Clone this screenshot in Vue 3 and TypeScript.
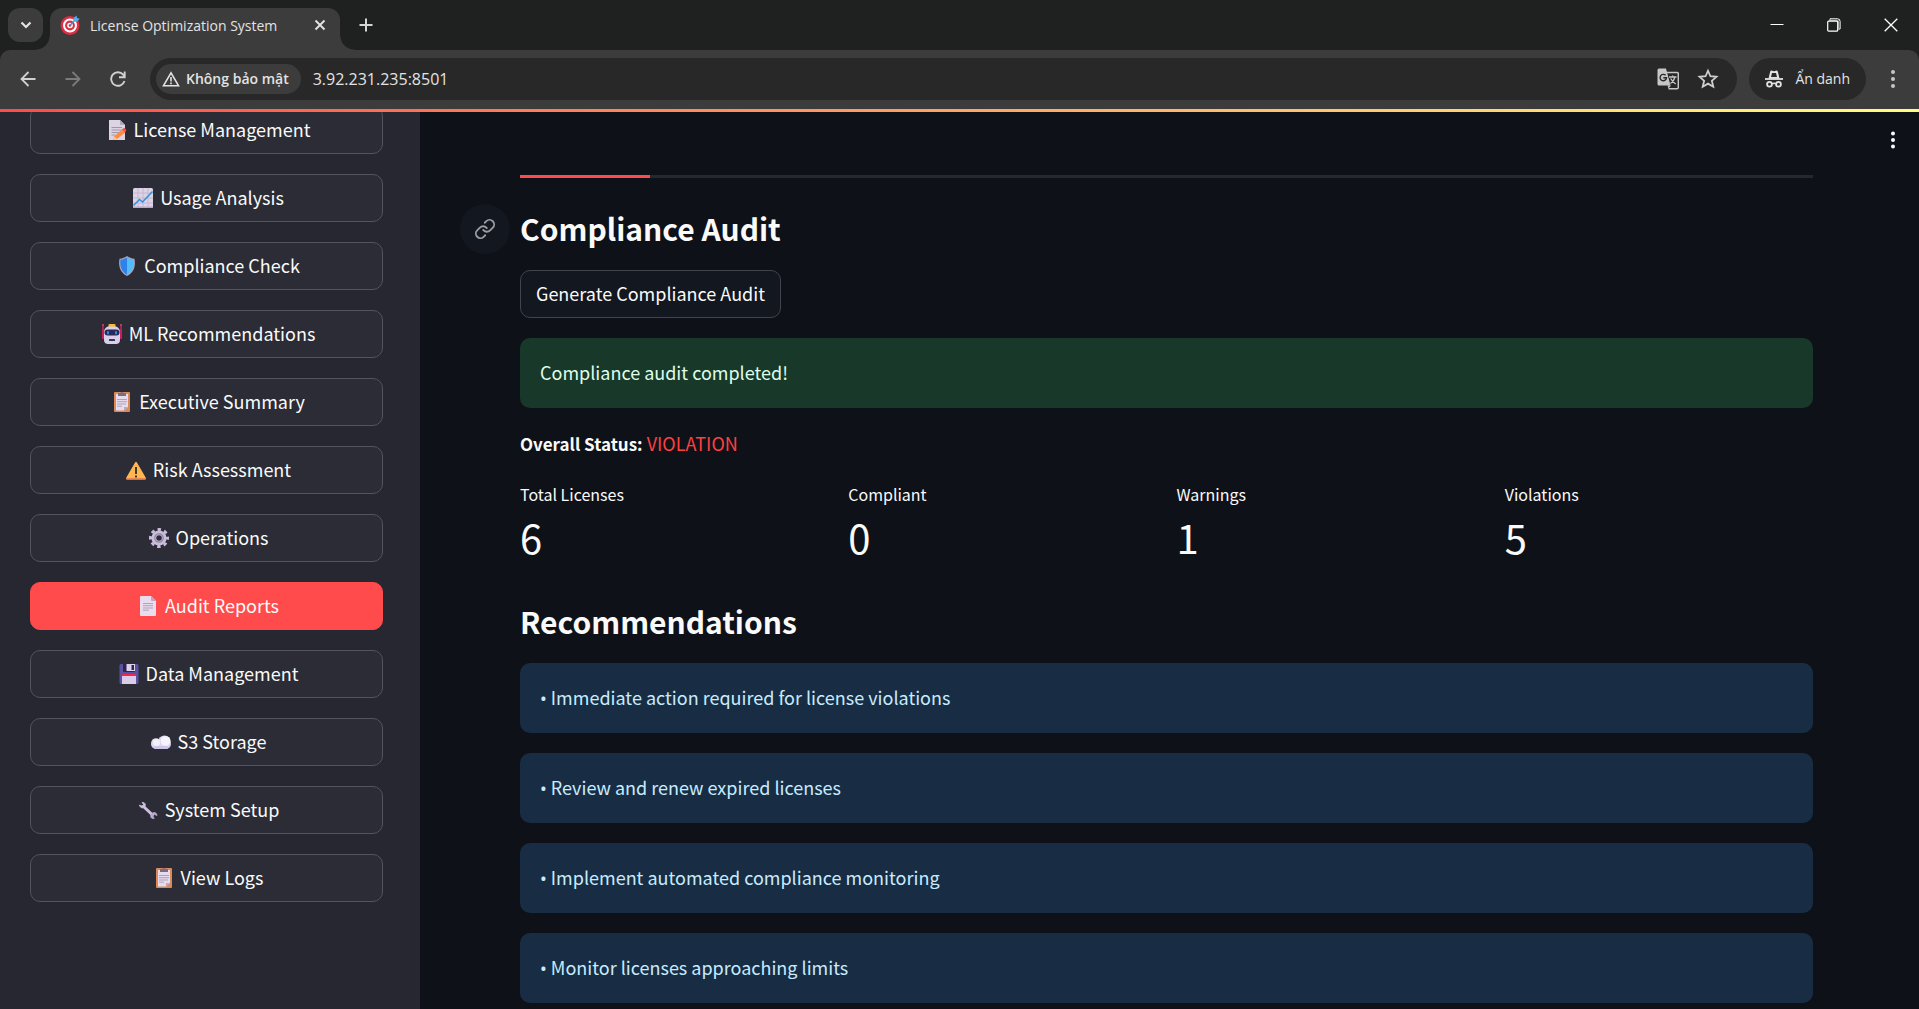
<script setup lang="ts">
import { ref } from 'vue'

interface NavItem {
  icon: string
  label: string
}

interface Metric {
  label: string
  value: number
}

const address = ref('3.92.231.235:8501')
const activePage = ref('Audit Reports')

const navItems: NavItem[] = [
  { icon: 'memo', label: 'License Management' },
  { icon: 'chart', label: 'Usage Analysis' },
  { icon: 'shield', label: 'Compliance Check' },
  { icon: 'robot', label: 'ML Recommendations' },
  { icon: 'clipboard', label: 'Executive Summary' },
  { icon: 'warning', label: 'Risk Assessment' },
  { icon: 'gear', label: 'Operations' },
  { icon: 'page', label: 'Audit Reports' },
  { icon: 'floppy', label: 'Data Management' },
  { icon: 'cloud', label: 'S3 Storage' },
  { icon: 'wrench', label: 'System Setup' },
  { icon: 'clipboard', label: 'View Logs' },
]

const metrics: Metric[] = [
  { label: 'Total Licenses', value: 6 },
  { label: 'Compliant', value: 0 },
  { label: 'Warnings', value: 1 },
  { label: 'Violations', value: 5 },
]

const recommendations: string[] = [
  'Immediate action required for license violations',
  'Review and renew expired licenses',
  'Implement automated compliance monitoring',
  'Monitor licenses approaching limits',
]
</script>

<template>
  <div class="window">
    <header class="browser">
      <div class="tab-strip">
        <button class="tab-search" aria-label="Search tabs">
          <svg width="12" height="8" viewBox="0 0 12 8"><path d="M1.5 1.5 6 6l4.500-4.500" fill="none" stroke="#e3e3e3" stroke-width="2.200" /></svg>
        </button>
        <div class="tab">
          <svg class="favicon" width="20" height="20" viewBox="0 0 20 20">
            <circle cx="10" cy="10.500" r="9.500" fill="#dd2e44" />
            <circle cx="10" cy="10.500" r="7" fill="#fff" />
            <circle cx="10" cy="10.500" r="4.900" fill="#dd2e44" />
            <circle cx="10" cy="10.500" r="2.800" fill="#fff" />
            <circle cx="10" cy="10.500" r="1.300" fill="#dd2e44" />
            <path d="M10 10.500 15 5" stroke="#4b8fbd" stroke-width="1.200" />
            <path d="M13.500 6.500V3L16.500.5 17 3l2.700.7L17 6.700z" fill="#55acee" />
          </svg>
          <span class="tab-title">License Optimization System</span>
          <button class="tab-close" aria-label="Close tab">
            <svg width="12" height="12" viewBox="0 0 12 12"><path d="M1.500 1.500l9 9M10.500 1.500l-9 9" stroke="#e3e3e3" stroke-width="1.900" /></svg>
          </button>
        </div>
        <button class="new-tab" aria-label="New tab">
          <svg width="14" height="14" viewBox="0 0 14 14"><path d="M7 .5v13M.5 7h13" stroke="#d5d5d5" stroke-width="2" /></svg>
        </button>
        <div class="window-controls">
          <button aria-label="Minimize">
            <svg width="14" height="14" viewBox="0 0 14 14"><path d="M.5 6.500h13" stroke="#fff" stroke-width="1" /></svg>
          </button>
          <button aria-label="Restore">
            <svg width="14" height="14" viewBox="0 0 14 14" fill="none">
              <path d="M3 2V.8h7.500a2.600 2.600 0 0 1 2.600 2.600V11H12" stroke="#fff" />
              <path d="M2 2.500h7.500c1 0 2 1 2 2V12" stroke="#8c8c8c" stroke-width="1.500" />
              <rect x=".7" y="3.200" width="10" height="10" rx="1" stroke="#fff" stroke-width="1.200" fill="#1f2120" />
            </svg>
          </button>
          <button aria-label="Close window">
            <svg width="14" height="14" viewBox="0 0 14 14"><path d="M.7.7l12.600 12.600M13.300.7.7 13.300" stroke="#fff" stroke-width="1.300" /></svg>
          </button>
        </div>
      </div>

      <div class="toolbar">
        <div class="history">
          <button aria-label="Back">
            <svg width="16" height="16" viewBox="0 0 16 16" fill="none" stroke="#d0d0d0" stroke-width="1.800"><path d="M15.500 8H1.500M8.500 1 1.500 8l7 7" /></svg>
          </button>
          <button aria-label="Forward">
            <svg width="16" height="16" viewBox="0 0 16 16" fill="none" stroke="#7c7c7c" stroke-width="1.800"><path d="M.5 8h14M7.500 1l7 7-7 7" /></svg>
          </button>
          <button aria-label="Reload">
            <svg width="16" height="16" viewBox="0 0 16 16" fill="none" stroke="#d0d0d0" stroke-width="1.900"><path d="M14.500 10A6.800 6.800 0 1 1 13.200 3.600L14.500 5.300M14.700.5v5.700H9" /></svg>
          </button>
        </div>
        <div class="omnibox">
          <button class="security">
            <svg width="18" height="16" viewBox="0 0 18 16" fill="none" stroke="#e3e3e3" stroke-width="1.600"><path d="M9 1.800 1.500 14.700h15zM9 6v4.500M9 11.500v1.700" /></svg>
            <span>Không bảo mật</span>
          </button>
          <input v-model="address" class="address" aria-label="Address" type="text" spellcheck="false" />
          <button class="page-action" aria-label="Translate this page">
            <svg width="22" height="22" viewBox="0 0 22 22" fill="none">
              <path d="M9 4.500h11a1.300 1.300 0 0 1 1.300 1.300v13.700a1.300 1.300 0 0 1-1.300 1.300h-8.500" stroke="#c7c7c7" stroke-width="1.500" />
              <path d="M2 .5h7l4.500 17H2A1.500 1.500 0 0 1 .5 16V2A1.500 1.500 0 0 1 2 .5z" fill="#c7c7c7" />
              <path d="M10.500 17.500h3.500l-2.500 3z" fill="#c7c7c7" />
              <path d="M8.600 7.300A3.200 3.200 0 1 0 9.500 9.700H6.300" stroke="#282828" stroke-width="1.400" />
              <path d="M12 9h7.500M15.700 7.500V9M18 9c-.7 3-2.500 5-4.500 6.500M13.700 10.500c1 2 2.800 4 5 5.500" stroke="#c7c7c7" stroke-width="1.300" />
            </svg>
          </button>
          <button class="page-action" aria-label="Bookmark this tab">
            <svg width="22" height="22" viewBox="0 0 20 20"><path d="M10 2.500l2.200 5 5.500.5-4.200 3.600 1.300 5.400L10 14.200 5.200 17l1.300-5.400L2.300 8l5.500-.5z" fill="none" stroke="#d0d0d0" stroke-width="1.600" /></svg>
          </button>
        </div>
        <button class="incognito">
          <svg width="18" height="18" viewBox="0 0 18 18" fill="none">
            <path d="M3.500 8.500 5.200 1.500C5.500.5 6.500.3 7.200.7c1 .6 2.600.6 3.600 0 .7-.4 1.700-.2 2 .8L14.500 8.500z" fill="#e3e3e3" />
            <path d="M7 3h4l1 4H6z" fill="#282828" />
            <path d="M0 9h18" stroke="#e3e3e3" stroke-width="1.800" />
            <path d="M7 14c1-.9 3-.9 4 0" stroke="#e3e3e3" stroke-width="1.500" />
            <circle cx="4.500" cy="14.300" r="2.400" stroke="#e3e3e3" stroke-width="1.800" />
            <circle cx="13.500" cy="14.300" r="2.400" stroke="#e3e3e3" stroke-width="1.800" />
          </svg>
          <span>Ẩn danh</span>
        </button>
        <button class="more" aria-label="Browser menu">
          <svg width="4" height="18" viewBox="0 0 4 18" fill="#c7c7c7"><circle cx="2" cy="2" r="2" /><circle cx="2" cy="9" r="2" /><circle cx="2" cy="16" r="2" /></svg>
        </button>
      </div>
    </header>

    <div class="decoration"></div>

    <div class="app">
      <aside class="sidebar">
        <nav class="nav">
          <button
            v-for="item in navItems"
            :key="item.label"
            class="nav-button"
            :class="{ active: item.label === activePage }"
            @click="activePage = item.label"
          >
            <svg width="27" height="20" viewBox="-4 0 27 20" fill="none" aria-hidden="true">
              <g v-if="item.icon === 'memo'">
                <path d="M2 0h11l5 5v15H2z" fill="#dcd3e4" />
                <path d="M13 0v5h5z" fill="#b4a9bd" />
                <path d="M4.500 7.500H15M4.500 10H15M4.500 12.500h8M4.500 15h4" stroke="#9a8fa5" stroke-width=".9" />
                <path d="M7 16.500 15 9.500l3 3.200-8 6.300-4 .8z" fill="#ff8b3d" />
                <path d="m15 9.500 1.500-1.300c1-.9 3.400 1.700 2.600 2.800L18 12.700z" fill="#f4504f" />
                <path d="m7 16.500 3 2.500-4 .8z" fill="#fbc9a6" />
              </g>
              <g v-else-if="item.icon === 'chart'">
                <rect width="20" height="20" rx="1.500" fill="#dcd3e4" />
                <path d="M5 0v20M10 0v20M15 0v20M0 5h20M0 10h20M0 15h20" stroke="#bfb3cb" stroke-width=".8" />
                <path d="M0 18.500h20v.5a1 1 0 0 1-1 1H1a1 1 0 0 1-1-1z" fill="#bba5d0" />
                <path d="m.5 17.500 6-6 3 2.500L19.500 3.500" stroke="#2d91dd" stroke-width="1.500" />
              </g>
              <g v-else-if="item.icon === 'shield'">
                <path d="M10 0c2 1.600 4.500 2.500 7.500 2.700 1.500 8-1 14-7.500 17.300C3.500 16.700 1 10.700 2.500 2.700 5.500 2.500 8 1.600 10 0z" fill="#aaa3bd" />
                <path d="M10 1.500c-2 1.300-4 2-6.500 2.200C2.600 10.500 4.800 15.600 10 18.700z" fill="#2e83e8" />
                <path d="M10 1.500c2 1.300 4 2 6.500 2.200.9 6.800-1.300 11.900-6.500 15z" fill="#51bdfb" />
              </g>
              <g v-else-if="item.icon === 'robot'">
                <path d="M1 1v5M19 1v5" stroke="#e32661" stroke-width="1.200" />
                <circle cx="1" cy="1" r="1" fill="#ee3c5a" /><circle cx="19" cy="1" r="1" fill="#ee3c5a" />
                <rect x="0" y="5" width="3" height="10" rx="1" fill="#c91c5d" /><rect x="17" y="5" width="3" height="10" rx="1" fill="#c91c5d" />
                <rect x="6.500" y="0" width="7" height="4" rx="1" fill="#fbb92f" />
                <path d="M2 9c0-4 2-6.500 5-6.500h6c3 0 5 2.500 5 6.500v7c0 2.500-1.500 4-4 4H6c-2.500 0-4-1.500-4-4z" fill="#d9cfe9" />
                <rect x="2.500" y="5.500" width="15" height="6" rx="3" fill="#29295a" />
                <rect x="5" y="7" width="2" height="3.500" rx="1" fill="#2a8fd0" /><rect x="13" y="7" width="2" height="3.500" rx="1" fill="#2a8fd0" />
                <rect x="7" y="15" width="6" height="2" rx=".5" fill="#39315f" />
              </g>
              <g v-else-if="item.icon === 'clipboard'">
                <rect x="2" y="0" width="16" height="20" rx="1" fill="#d98a58" />
                <path d="M4 2h12v13l-4 3.500H4z" fill="#e6dced" />
                <path d="M12 18.500V15h4z" fill="#b9a8c5" />
                <path d="M6 1h2c.5-1 3.500-1 4 0h2v3H6z" fill="#786d81" />
                <path d="M5 7.500h10M5 9.700h10M5 12h9M5 14.200h5" stroke="#a99db3" stroke-width=".9" />
              </g>
              <g v-else-if="item.icon === 'warning'">
                <path d="M9.200 2.300c.4-.7 1.200-.7 1.600 0l9 15.500c.4.8 0 1.700-.8 1.700H1c-.8 0-1.200-.9-.8-1.700z" fill="#ffb74f" />
                <path d="M.2 18h19.600c.2.800-.2 1.500-.8 1.500H1c-.6 0-1-.7-.8-1.500z" fill="#e98551" />
                <path d="M9 7h2v7H9zM9 15.500h2v2H9z" fill="#46382f" />
              </g>
              <g v-else-if="item.icon === 'gear'">
                <circle cx="10" cy="10" r="8.500" stroke="#cabddb" stroke-width="3" stroke-dasharray="3.400 3.276" stroke-dashoffset="1.700" />
                <circle cx="10" cy="10" r="5.200" stroke="#cabddb" stroke-width="4.800" />
                <circle cx="10" cy="10" r="4.200" stroke="#9183a5" stroke-width="1.200" />
              </g>
              <g v-else-if="item.icon === 'page'">
                <path d="M3 0h10l5 5v14a1 1 0 0 1-1 1H3a1 1 0 0 1-1-1V1a1 1 0 0 1 1-1z" fill="#e8dcee" />
                <path d="M13 0v4a1 1 0 0 0 1 1h4z" fill="#b7a9c4" />
                <path d="M5 7.500h10M5 9.700h10M5 12h10M5 14.200h6" stroke="#a99bb3" stroke-width=".9" />
              </g>
              <g v-else-if="item.icon === 'floppy'">
                <rect x=".5" y="0" width="19" height="20" rx="1.500" fill="#5952a2" />
                <path d="M4 0h12v7a1 1 0 0 1-1 1H5a1 1 0 0 1-1-1z" fill="#2e234e" />
                <path d="M7.500 0H16v7H7.500z" fill="#ddd3ea" /><path d="M12.500 1H15v5h-2.500z" fill="#302550" />
                <path d="M3 10h14v10H3z" fill="#dbcdea" /><path d="M3 10h14v2H3z" fill="#ee2750" />
              </g>
              <g v-else-if="item.icon === 'cloud'">
                <rect x="0" y="7.500" width="20" height="9.500" rx="4.750" fill="#cfc4e9" />
                <circle cx="13.500" cy="9.800" r="6.300" fill="#dfd9ef" />
                <circle cx="14.500" cy="9" r="4.800" fill="#f6f4fa" />
                <circle cx="5" cy="11" r="4.800" fill="#dfd9ef" />
                <circle cx="5.500" cy="10.500" r="3.500" fill="#f3f0f8" />
                <rect x="3" y="14" width="14" height="3" rx="1" fill="#cfc4e9" />
              </g>
              <g v-else-if="item.icon === 'wrench'">
                <path d="m5.500 6.500 9 8.500" stroke="#cfbfe1" stroke-width="3" />
                <path d="M4 2.500C7 2 8.500 5 6.500 7S1.500 7.300 1.500 5L4 6l1.500-1.500z" fill="#cdbddf" stroke="#cdbddf" stroke-width=".8" />
                <path d="M16.200 18.500c-3 .5-4.700-2-2.700-4.500s5.500-1.500 5.500 1.500l-2.500-1-1.500 1.500z" fill="#bba9cd" stroke="#bba9cd" stroke-width=".8" />
              </g>
            </svg>
            <span>{{ item.label }}</span>
          </button>
        </nav>
      </aside>

      <main class="main">
        <button class="app-menu" aria-label="App menu">
          <svg width="4" height="18" viewBox="0 0 4 18" fill="#fafafa"><circle cx="2" cy="2.500" r="2" /><circle cx="2" cy="9" r="2" /><circle cx="2" cy="15.500" r="2" /></svg>
        </button>

        <div class="tab-track"><div class="tab-highlight"></div></div>

        <h2 id="compliance-audit" class="heading">
          <a class="anchor" href="#compliance-audit" aria-label="Link to heading">
            <svg width="22" height="22" viewBox="0 0 24 24" fill="none" stroke="#9b9da2" stroke-width="2" stroke-linecap="round" stroke-linejoin="round">
              <path d="M10 13a5 5 0 0 0 7.540.540l3-3a5 5 0 0 0-7.070-7.070l-1.720 1.710" />
              <path d="M14 11a5 5 0 0 0-7.540-.540l-3 3a5 5 0 0 0 7.070 7.070l1.710-1.710" />
            </svg>
          </a>
          Compliance Audit
        </h2>

        <button class="generate"><span>Generate Compliance Audit</span></button>

        <div class="alert success" role="status">Compliance audit completed!</div>

        <p class="status"><strong>Overall Status:</strong> <span class="violation">VIOLATION</span></p>

        <dl class="metrics">
          <div v-for="metric in metrics" :key="metric.label" class="metric">
            <dt>{{ metric.label }}</dt>
            <dd>{{ metric.value }}</dd>
          </div>
        </dl>

        <h2 class="heading recommendations-heading">Recommendations</h2>

        <div class="recommendations">
          <div v-for="text in recommendations" :key="text" class="alert info"><span class="bullet">•</span> {{ text }}</div>
        </div>
      </main>
    </div>
  </div>
</template>

<style>
body {
  margin: 0;
  background: #0e1117;
}
</style>

<style scoped>
.window {
  min-height: 100vh;
  display: flex;
  flex-direction: column;
  font-family: "Noto Sans CJK SC", "Noto Sans", sans-serif;
  font-size: 18px;
  color: #fafafa;
}

button {
  margin: 0;
  padding: 0;
  border: 0;
  background: none;
  color: inherit;
  font: inherit;
  display: flex;
  align-items: center;
  justify-content: center;
  cursor: pointer;
}

svg {
  display: block;
  flex: none;
}

/* Browser chrome */
.browser {
  background: #1f2120;
  font-family: "Open Sans", "Noto Sans", sans-serif;
  color: #e3e3e3;
}

.tab-strip {
  height: 50px;
  display: flex;
  align-items: stretch;
  padding-left: 8px;
}

.tab-search {
  width: 35px;
  height: 34px;
  margin: 8px 7px 0 0;
  border-radius: 12px;
  background: #3c3c3c;
}

.tab {
  position: relative;
  width: 290px;
  box-sizing: border-box;
  margin-top: 8px;
  padding: 0 14px 8px 10px;
  display: flex;
  align-items: center;
  border-radius: 12px 12px 0 0;
  background: #3c3c3c;
}

.tab::before,
.tab::after {
  content: "";
  position: absolute;
  bottom: 0;
  width: 14px;
  height: 14px;
}

.tab::before {
  right: 100%;
  background: radial-gradient(circle at 0 0, transparent 13px, #3c3c3c 14px);
}

.tab::after {
  left: 100%;
  background: radial-gradient(circle at 100% 0, transparent 13px, #3c3c3c 14px);
}

.tab-title {
  flex: 1;
  margin-left: 10px;
  font-size: 14px;
  white-space: nowrap;
}

.new-tab {
  width: 36px;
  margin: 0 auto 0 8px;
}

.window-controls {
  display: flex;
}

.window-controls button {
  width: 57px;
}

.toolbar {
  height: 59px;
  box-sizing: border-box;
  display: flex;
  align-items: center;
  padding: 0 11px 2px 12px;
  border-radius: 10px 10px 0 0;
  background: #3c3c3c;
}

.history {
  display: flex;
  gap: 13px;
  margin-right: 16px;
}

.history button {
  width: 32px;
  height: 32px;
}

.omnibox {
  flex: 1;
  height: 42px;
  box-sizing: border-box;
  display: flex;
  align-items: center;
  padding: 0 15px 0 6px;
  border-radius: 21px;
  background: #282828;
}

.security {
  height: 30px;
  gap: 6px;
  padding: 0 12px 0 6px;
  border-radius: 15px;
  background: #3c3c3c;
  font-size: 14px;
  font-weight: 600;
  white-space: nowrap;
}

.address {
  flex: 1;
  min-width: 0;
  margin-left: 12px;
  padding: 0;
  border: 0;
  outline: 0;
  background: none;
  color: #e3e3e3;
  font: inherit;
  font-size: 16px;
}

.page-action {
  width: 28px;
  height: 28px;
  margin-left: 12px;
}

.incognito {
  height: 42px;
  gap: 12px;
  margin-left: 12px;
  padding: 0 16px;
  border-radius: 21px;
  background: #282828;
  font-size: 14px;
  white-space: nowrap;
}

.more {
  width: 30px;
  height: 32px;
  margin-left: 12px;
}

/* Application */
.decoration {
  height: 3px;
  background: linear-gradient(90deg, #ff4b4b, #fffd80);
}

.app {
  flex: 1;
  display: flex;
}

.sidebar {
  flex: none;
  width: 420px;
  box-sizing: border-box;
  padding: 0 37px 0 30px;
  overflow: hidden;
  background: #262730;
}

.nav {
  display: flex;
  flex-direction: column;
  gap: 20px;
  margin-top: -6px;
}

.nav-button {
  height: 48px;
  gap: 4px;
  border: 1px solid #52535b;
  border-radius: 10px;
  background: #2b2c36;
}

.nav-button span,
.generate span {
  padding-bottom: 2px;
}

.nav-button.active {
  border-color: #ff4b4b;
  background: #ff4b4b;
}

.main {
  position: relative;
  flex: 1;
  min-width: 0;
  padding: 63px 106px 6px 100px;
  background: #0e1117;
}

.app-menu {
  position: absolute;
  top: 10px;
  right: 10px;
  width: 32px;
  height: 36px;
}

.tab-track {
  height: 3px;
  background: #262730;
}

.tab-highlight {
  width: 130px;
  height: 3px;
  background: #ff4b4b;
}

.heading {
  position: relative;
  margin: 26px 0 16px;
  padding-bottom: 2px;
  font-size: 30px;
  font-weight: 700;
  line-height: 48px;
}

.anchor {
  position: absolute;
  top: 0;
  left: -60px;
  width: 50px;
  height: 50px;
  display: flex;
  align-items: center;
  justify-content: center;
  border-radius: 50%;
  background: #13171f;
}

.generate {
  height: 48px;
  padding: 0 15px;
  border: 1px solid #41444c;
  border-radius: 10px;
  background: #13171f;
}

.alert {
  padding: 18px 20px 20px;
  border-radius: 10px;
  line-height: 32px;
}

.success {
  margin-top: 20px;
  background: #183929;
  color: #dffde9;
}

.info {
  background: #182d43;
  color: #c7ebff;
}

.bullet {
  font-family: "Noto Sans", sans-serif;
  line-height: 1;
}

.status {
  margin: 20px 0;
  padding-bottom: 2px;
  line-height: 30px;
}

.status strong {
  font-size: 17px;
  line-height: 1;
}

.violation {
  color: #ff4040;
}

.metrics {
  display: grid;
  grid-template-columns: repeat(4, 1fr);
  gap: 20px;
  margin: 0;
}

.metric dt {
  padding-bottom: 2px;
  font-size: 16px;
  line-height: 28px;
}

.metric dd {
  margin: 0;
  padding-bottom: 6px;
  font-size: 40px;
  line-height: 54px;
}

.recommendations-heading {
  margin-top: 27px;
}

.recommendations {
  display: flex;
  flex-direction: column;
  gap: 20px;
}
</style>
